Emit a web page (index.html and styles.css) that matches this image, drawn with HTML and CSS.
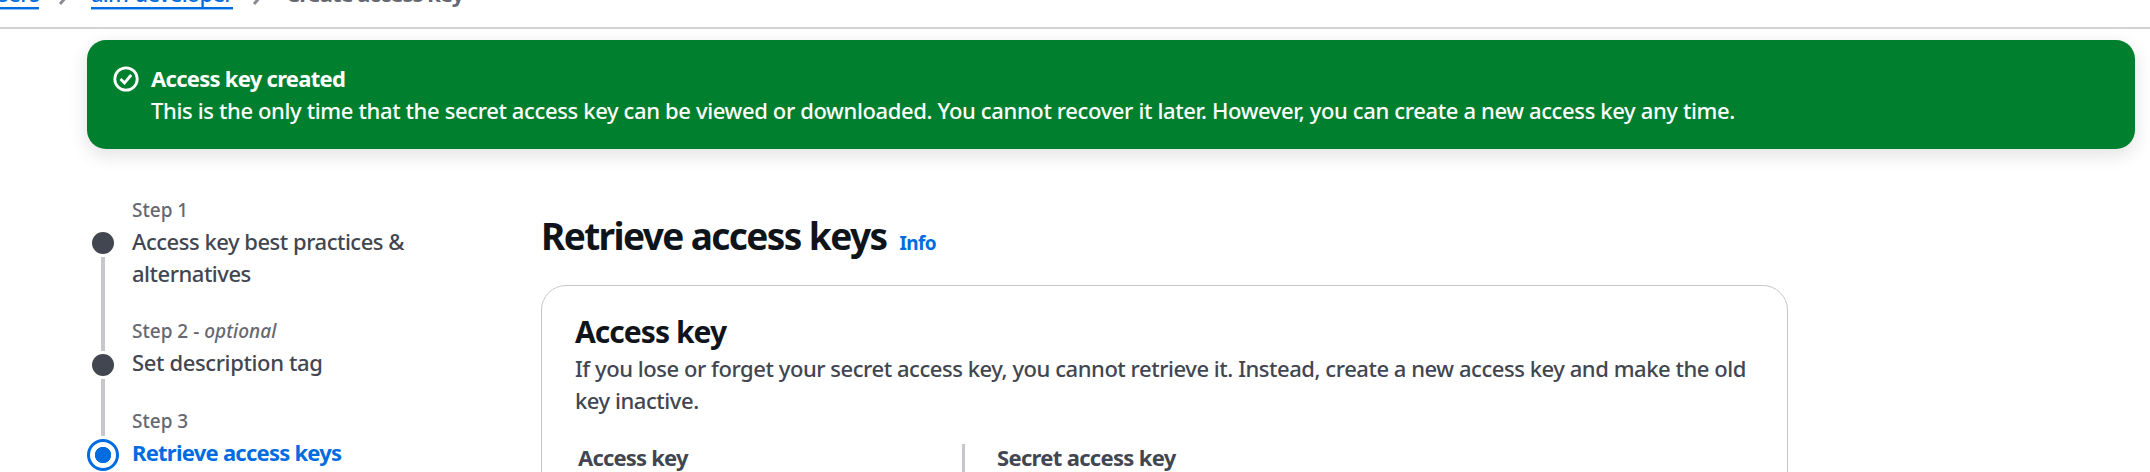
FILE: index.html
```
<!DOCTYPE html>
<html lang="en">
<head>
<meta charset="utf-8">
<title>Create access key</title>
<link rel="stylesheet" href="styles.css">
</head>
<body>
<div class="page">
  <nav class="breadcrumbs">
    <a class="crumb crumb-users">Users</a>
    <svg class="chevron" viewBox="0 0 16 22"><path d="M4 2l8 9-8 9"/></svg>
    <a class="crumb crumb-name">aim-developer</a>
    <svg class="chevron" viewBox="0 0 16 22"><path d="M4 2l8 9-8 9"/></svg>
    <span class="crumb-current">Create access key</span>
  </nav>

  <section class="flash">
    <svg class="flash-icon" viewBox="0 0 26 26"><circle cx="13" cy="13" r="11.2"/><path d="M7.5 13l4 4 6.7-8"/></svg>
    <div class="flash-text">
      <div class="flash-title">Access key created</div>
      <div class="flash-body">This is the only time that the secret access key can be viewed or downloaded. You cannot recover it later. However, you can create a new access key any time.</div>
    </div>
  </section>

  <div class="content">
    <ol class="steps">
      <li class="step">
        <div class="rail"><span class="dot"></span><span class="line"></span></div>
        <div class="step-text">
          <div class="step-label">Step 1</div>
          <div class="step-title step-title-long">Access key best practices &amp; alternatives</div>
        </div>
      </li>
      <li class="step step-second">
        <div class="rail"><span class="dot"></span><span class="line"></span></div>
        <div class="step-text">
          <div class="step-label">Step 2 - <i>optional</i></div>
          <div class="step-title">Set description tag</div>
        </div>
      </li>
      <li class="step">
        <div class="rail rail-active"><span class="ring"></span></div>
        <div class="step-text">
          <div class="step-label">Step 3</div>
          <div class="step-title step-active">Retrieve access keys</div>
        </div>
      </li>
    </ol>

    <main class="main">
      <header class="heading">
        <h1 class="title">Retrieve access keys</h1>
        <a class="info">Info</a>
      </header>
      <section class="card">
        <h2 class="card-title">Access key</h2>
        <p class="card-desc">If you lose or forget your secret access key, you cannot retrieve it. Instead, create a new access key and make the old key inactive.</p>
        <div class="columns">
          <div class="col col-key">Access key</div>
          <div class="col col-secret">Secret access key</div>
        </div>
      </section>
    </main>
  </div>
</div>
</body>
</html>
```

FILE: styles.css
```
* { box-sizing: border-box; }
html, body { margin: 0; overflow: hidden; }
body { background: #fff; }

.page {
  width: 2150px;
  height: 472px;
  overflow: hidden;
  font: 500 22px/32px "Noto Sans", "Open Sans", sans-serif;
  color: #424650;
}

.breadcrumbs {
  display: flex;
  align-items: flex-start;
  height: 52px;
  margin-top: -23px;
  border-bottom: 2px solid #d2d2d4;
}
.crumb {
  height: 32px;
  color: #006ce0;
  border-bottom: 2px solid #006ce0;
  box-shadow: 0 1px 0 #8dbff2;
}
.crumb-users { width: 57px; margin-left: -18px; letter-spacing: -0.4px; }
.crumb-name { width: 142px; letter-spacing: -0.73px; white-space: nowrap; }
.chevron {
  width: 16px;
  height: 22px;
  margin: 7px 19px 0 17px;
  fill: none;
  stroke: #8c8c94;
  stroke-width: 3;
}
.crumb-current { margin-left: 1px; color: #656871; font-weight: 700; letter-spacing: -0.98px; }

.flash {
  display: flex;
  width: 2048px;
  height: 109px;
  margin: 11px 0 0 87px;
  padding: 22px 25px 22px 26px;
  border-radius: 19px;
  background: #00802f;
  color: #fff;
  box-shadow: 0 6px 18px 1px rgba(0, 7, 22, 0.11);
}
.flash-icon {
  width: 26px;
  height: 26px;
  margin: 4px 12px 0 0;
  fill: none;
  stroke: #fff;
  stroke-width: 2.8;
}
.flash-title { font-weight: 700; letter-spacing: -0.72px; }
.flash-body { letter-spacing: -0.366px; white-space: nowrap; }

.content { display: flex; }

.steps {
  flex: none;
  width: 541px;
  margin: 0;
  padding: 47px 0 0 87px;
  list-style: none;
}
.step { display: flex; height: 121px; }
.step-second { height: 90px; }
.rail {
  display: flex;
  flex-direction: column;
  align-items: center;
  width: 32px;
  margin-right: 13px;
  padding-top: 36px;
}
.dot { flex: none; width: 22px; height: 22px; border-radius: 50%; background: #424650; }
.line {
  flex: none;
  width: 4px;
  height: 94px;
  margin-top: 3px;
  background: #c6c6cd;
}
.step-second .rail { padding-top: 37px; }
.step-second .line { height: 57px; }
.rail-active { padding-top: 32px; }
.ring {
  flex: none;
  width: 32px;
  height: 32px;
  border: 3px solid #006ce0;
  border-radius: 50%;
  background: radial-gradient(circle, #006ce0 7.8px, #fff 8.5px);
}
.step-label { padding-top: 1px; font-size: 19px; line-height: 27px; color: #656871; letter-spacing: 0; }
.step-label i { letter-spacing: 0.05px; }
.step-title { margin-top: 1px; letter-spacing: -0.37px; white-space: nowrap; }
.step-title-long { width: 290px; white-space: normal; letter-spacing: -0.48px; }
.step-active { color: #006ce0; font-weight: 700; letter-spacing: -0.75px; }

.main { width: 1247px; padding-top: 64px; }
.heading { display: flex; align-items: baseline; height: 72px; }
.title {
  margin: 0;
  font-size: 37px;
  line-height: 46px;
  font-weight: 700;
  letter-spacing: -1.6px;
  color: #0f141a;
}
.info { margin-left: 13px; font-size: 19px; line-height: 24px; font-weight: 700; letter-spacing: -0.6px; color: #006ce0; }

.card {
  height: 240px;
  padding: 27px 33px 26px;
  border: 1px solid #c6c6cd;
  border-radius: 25px;
}
.card-title { margin: 0; font-size: 30px; line-height: 38px; font-weight: 700; letter-spacing: -0.95px; color: #0f141a; }
.card-desc { width: 1178px; margin: 1px 0 0; letter-spacing: -0.45px; }
.columns { display: flex; margin-top: 28px; height: 80px; }
.col { font-weight: 700; line-height: 27px; }
.col-key { width: 387px; padding-left: 3px; letter-spacing: -0.8px; }
.col-secret { padding-left: 32px; border-left: 3px solid #c6c6cd; letter-spacing: -0.68px; }
```
